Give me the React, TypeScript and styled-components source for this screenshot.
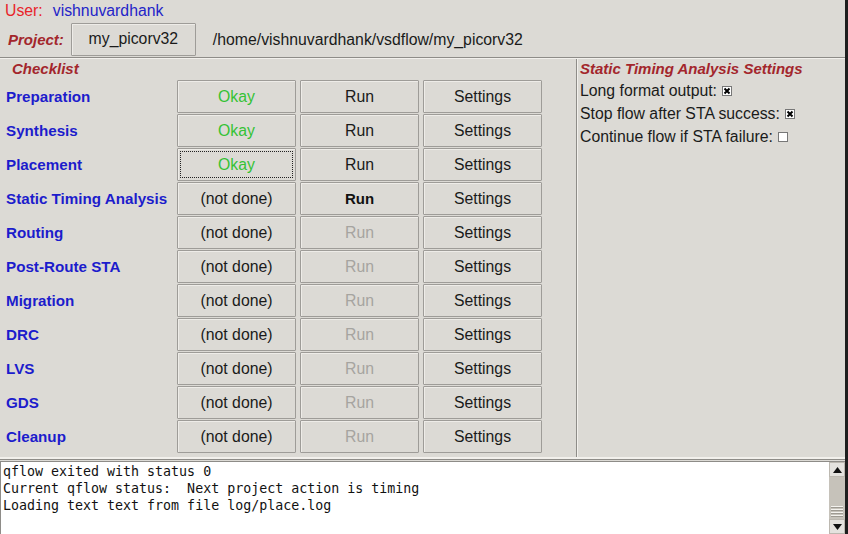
import React from "react";
import styled, { createGlobalStyle, css } from "styled-components";

const GlobalStyle = createGlobalStyle`
  html, body {
    margin: 0;
    padding: 0;
    background: #dcdad5;
  }
  body {
    font-family: "Liberation Sans", Arial, sans-serif;
    font-size: 15.8px;
  }
`;

const Window = styled.div`
  width: 848px;
  height: 534px;
  display: flex;
  background: #dcdad5;
  overflow: hidden;
`;

const Frame = styled.div`
  flex: 1;
  display: flex;
  flex-direction: column;
  min-width: 0;
`;

const WindowEdge = styled.div`
  width: 3px;
  background: #1e1e1e;
`;

const UserRow = styled.div`
  height: 22px;
  display: flex;
  align-items: center;
  padding-left: 5px;
  gap: 10px;
`;

const UserLabel = styled.span`
  color: #e8242a;
`;

const UserName = styled.span`
  color: #2424c8;
`;

const ProjectRow = styled.div`
  height: 35px;
  display: flex;
  align-items: center;
  padding-left: 8px;
  border-bottom: 1px solid #8e8c88;
`;

const HeadingLabel = styled.span`
  color: #a3262c;
  font-weight: bold;
  font-style: italic;
  font-size: 15px;
`;

const Button = styled.div<{ $w: number; $tone?: "ok" | "dim" | "bold"; $focus?: boolean }>`
  width: ${(p) => p.$w}px;
  height: 33px;
  box-sizing: border-box;
  display: flex;
  align-items: center;
  justify-content: center;
  position: relative;
  background: #dcdad5;
  border: 1px solid #9e9c98;
  border-radius: 1px;
  box-shadow: inset 1px 1px 0 #eeece8;
  color: #1a1a1a;
  ${(p) => p.$tone === "ok" && css`color: #34c234;`}
  ${(p) => p.$tone === "dim" && css`color: #a6a4a0;`}
  ${(p) => p.$tone === "bold" && css`font-weight: bold; color: #111; font-size: 15px;`}
  ${(p) =>
    p.$focus &&
    css`
      &::after {
        content: "";
        position: absolute;
        inset: 2px;
        border: 1px dotted #222;
      }
    `}
`;

const ProjectButton = styled(Button)`
  margin-left: 7px;
  margin-top: -1px;
`;

const PathText = styled.span`
  margin-left: 17px;
  color: #1a1a1a;
`;

const Main = styled.div`
  height: 398px;
  display: flex;
  border-top: 1px solid #f2f0ec;
`;

const ChecklistPanel = styled.div`
  width: 577px;
  border-right: 1px solid #8e8c88;
  padding-left: 6px;
  box-sizing: border-box;
`;

const ChecklistTitle = styled(HeadingLabel)`
  display: block;
  height: 21px;
  line-height: 20px;
  padding-left: 6px;
`;

const Grid = styled.div`
  display: grid;
  grid-template-columns: 167px 119px 119px 119px;
  column-gap: 4px;
  row-gap: 1px;
`;

const StepName = styled.div`
  height: 33px;
  display: flex;
  align-items: center;
  color: #1c1ccc;
  font-weight: bold;
  font-size: 15.2px;
`;

const SettingsPanel = styled.div`
  flex: 1;
  border-left: 1px solid #f2f0ec;
  padding-left: 2px;
  display: flex;
  flex-direction: column;
`;

const SettingsTitle = styled(HeadingLabel)`
  height: 20px;
  line-height: 20px;
`;

const OptionRow = styled.div`
  height: 23px;
  display: flex;
  align-items: center;
  color: #1a1a1a;
`;

const Check = styled.span`
  width: 10px;
  height: 10px;
  margin-left: 5px;
  box-sizing: border-box;
  border: 1px solid #777;
  background: #fff;
  display: inline-flex;
  align-items: center;
  justify-content: center;
`;

const Console = styled.div`
  flex: 1;
  display: flex;
  border-top: 2px solid #f2f0ec;
  box-shadow: inset 0 1px 0 #8e8c88;
  padding-top: 2px;
`;

const ConsoleText = styled.pre`
  flex: 1;
  margin: 0;
  background: #fff;
  border-top: 1px solid #8e8c88;
  border-left: 1px solid #8e8c88;
  padding: 1px 2px;
  font-family: "DejaVu Sans Mono", monospace;
  font-size: 13.3px;
  line-height: 17px;
  color: #111;
`;

const Scrollbar = styled.div`
  width: 16px;
  display: flex;
  flex-direction: column;
  background: #c6c2ba;
  border-top: 1px solid #8e8c88;
`;

const ArrowBox = styled.div`
  height: 13px;
  background: #e4e2de;
  border: 1px solid #bcb8b0;
  display: flex;
  align-items: center;
  justify-content: center;
`;

const Track = styled.div`
  flex: 1;
  display: flex;
  flex-direction: column;
  justify-content: flex-end;
  align-items: center;
  padding-bottom: 3px;
  gap: 2px;
`;

const Grip = styled.div`
  width: 12px;
  height: 1px;
  background: #f4f2ee;
  box-shadow: 0 1px 0 #9e9a92;
`;

const Tri = ({ up }: { up?: boolean }) => (
  <svg width="9" height="6" viewBox="0 0 9 6">
    <path d={up ? "M0 6 L4.5 0 L9 6 Z" : "M0 0 L4.5 6 L9 0 Z"} fill="#111" />
  </svg>
);

const steps = [
  "Preparation",
  "Synthesis",
  "Placement",
  "Static Timing Analysis",
  "Routing",
  "Post-Route STA",
  "Migration",
  "DRC",
  "LVS",
  "GDS",
  "Cleanup",
];

const options = [
  { label: "Long format output:", on: true },
  { label: "Stop flow after STA success:", on: true },
  { label: "Continue flow if STA failure:", on: false },
];

const App = () => {
  return (
    <Window>
      <GlobalStyle />
      <Frame>
        <UserRow>
          <UserLabel>User:</UserLabel>
          <UserName>vishnuvardhank</UserName>
        </UserRow>
        <ProjectRow>
          <HeadingLabel>Project:</HeadingLabel>
          <ProjectButton $w={125}>my_picorv32</ProjectButton>
          <PathText>/home/vishnuvardhank/vsdflow/my_picorv32</PathText>
        </ProjectRow>
        <Main>
          <ChecklistPanel>
            <ChecklistTitle>Checklist</ChecklistTitle>
            <Grid>
              {steps.map((name, i) => {
                const done = i < 3;
                const runTone = i < 3 ? undefined : i === 3 ? "bold" : "dim";
                return (
                  <React.Fragment key={name}>
                    <StepName>{name}</StepName>
                    <Button $w={119} $tone={done ? "ok" : undefined} $focus={i === 2}>
                      {done ? "Okay" : "(not done)"}
                    </Button>
                    <Button $w={119} $tone={runTone}>Run</Button>
                    <Button $w={119}>Settings</Button>
                  </React.Fragment>
                );
              })}
            </Grid>
          </ChecklistPanel>
          <SettingsPanel>
            <SettingsTitle>Static Timing Analysis Settings</SettingsTitle>
            {options.map((o) => (
              <OptionRow key={o.label}>
                {o.label}
                <Check>
                  {o.on && (
                    <svg width="8" height="8" viewBox="0 0 8 8">
                      <path d="M1.5 1.5 L6.5 6.5 M6.5 1.5 L1.5 6.5" stroke="#000" strokeWidth="2" />
                    </svg>
                  )}
                </Check>
              </OptionRow>
            ))}
          </SettingsPanel>
        </Main>
        <Console>
          <ConsoleText>
            {"qflow exited with status 0\nCurrent qflow status:  Next project action is timing\nLoading text text from file log/place.log"}
          </ConsoleText>
          <Scrollbar>
            <ArrowBox>
              <Tri up />
            </ArrowBox>
            <Track>
              <Grip />
              <Grip />
              <Grip />
              <Grip />
            </Track>
            <ArrowBox>
              <Tri />
            </ArrowBox>
          </Scrollbar>
        </Console>
      </Frame>
      <WindowEdge />
    </Window>
  );
};

export default App;
